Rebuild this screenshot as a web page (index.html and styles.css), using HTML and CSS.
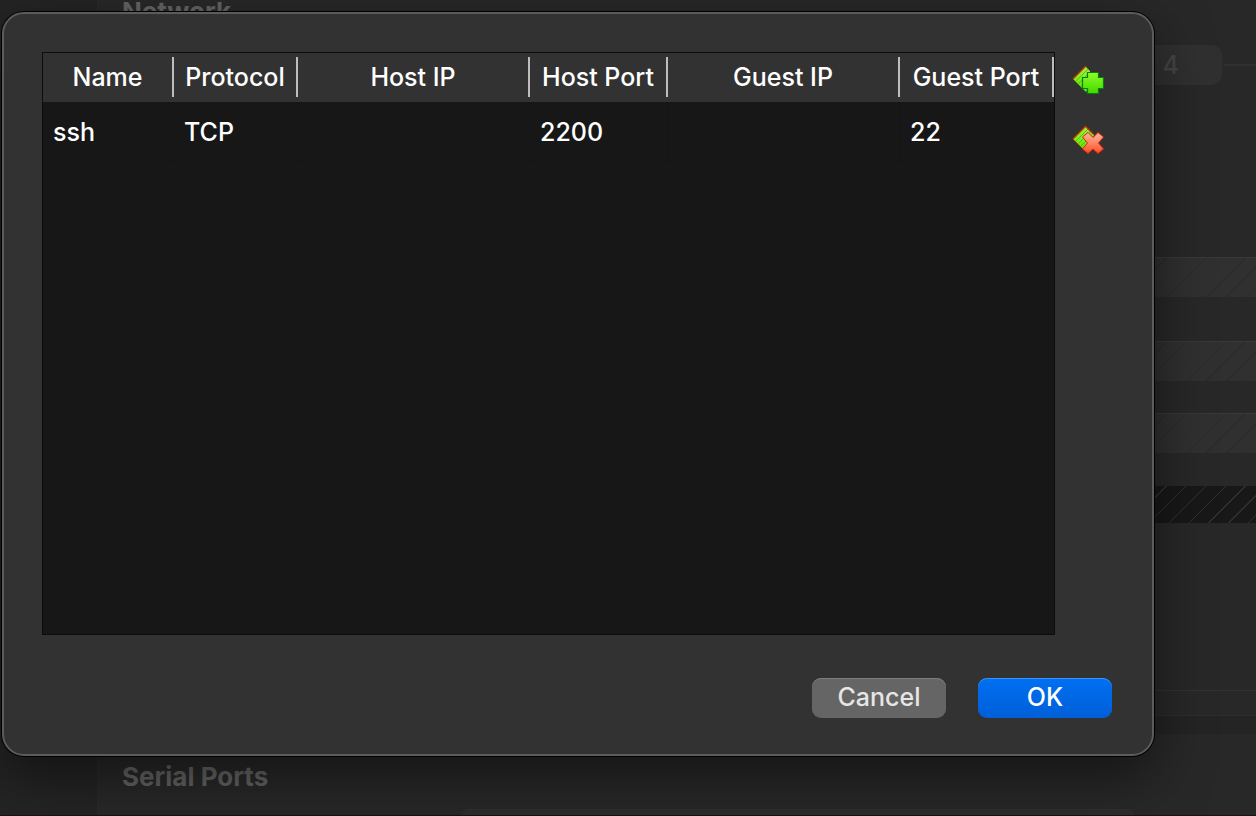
FILE: index.html
```
<!DOCTYPE html>
<html lang="en">
<head>
<meta charset="utf-8">
<title>Port Forwarding Rules</title>
<link rel="stylesheet" href="styles.css">
</head>
<body>
<div class="window">
  <div class="sidebar"></div>
  <main class="settings">
    <h2 class="section-title">Network</h2>
    <div class="field-row">
      <input class="count" type="text" value="4" aria-label="Count" disabled>
      <span class="rule"></span>
    </div>
    <div class="band band-first"></div>
    <div class="band band-second"></div>
    <div class="band band-third"></div>
    <div class="band band-dark"></div>
    <div class="group-end"></div>
    <div class="group-gap"></div>
    <h2 class="section-title">Serial Ports</h2>
    <div class="next-group"></div>
  </main>
</div>

<div class="dialog" role="dialog" aria-label="Port Forwarding Rules">
  <div class="rules">
    <div class="table-frame">
      <table class="rule-table">
        <colgroup>
          <col class="col-name"><col class="col-protocol"><col><col class="col-host-port"><col><col class="col-guest-port">
        </colgroup>
        <thead>
          <tr>
            <th scope="col"><span class="head">Name</span></th>
            <th scope="col"><span class="head">Protocol</span></th>
            <th scope="col"><span class="head">Host IP</span></th>
            <th scope="col"><span class="head">Host Port</span></th>
            <th scope="col"><span class="head">Guest IP</span></th>
            <th scope="col"><span class="head">Guest Port</span></th>
          </tr>
        </thead>
        <tbody>
          <tr><td>ssh</td><td>TCP</td><td></td><td>2200</td><td></td><td>22</td></tr>
        </tbody>
      </table>
    </div>
    <div class="tools">
      <button class="tool" type="button" aria-label="Add rule">
        <svg viewBox="0 0 32 32" width="32" height="32" aria-hidden="true">
          <defs>
            <linearGradient id="leaf" x1="0" y1="0" x2="0" y2="1"><stop offset="0" stop-color="#a4f03c"/><stop offset=".5" stop-color="#7dee1c"/><stop offset="1" stop-color="#4fdc08"/></linearGradient>
            <linearGradient id="plus" x1="0" y1="0" x2="0" y2="1"><stop offset="0" stop-color="#8cff28"/><stop offset="1" stop-color="#43d800"/></linearGradient>
            <linearGradient id="cross" x1="0" y1="0" x2="0" y2="1"><stop offset="0" stop-color="#ffb49a"/><stop offset=".5" stop-color="#ff8565"/><stop offset="1" stop-color="#ff4a20"/></linearGradient>
          </defs>
          <path d="M1 15 13.500 2.500 18 7 18 23 14 28Z" fill="url(#leaf)"/>
          <path d="M4 17 16 5M6.500 19.500 18 8M9 22 18 13M11.500 24.500 18 18" stroke="#56b414" stroke-width=".9" fill="none"/>
          <path d="M14 3 13.500 2.500 1 15" stroke="#c43a00" stroke-width="1.300" fill="none"/>
          <path d="M1 15 14 28" stroke="#3f9c10" stroke-width=".8" fill="none"/>
          <path d="M15.500 8.500h11v5h5v11h-5v5h-11v-5h-5v-11h5z" fill="url(#plus)" stroke="#087d10" stroke-width="1.200"/>
        </svg>
      </button>
      <button class="tool" type="button" aria-label="Remove rule">
        <svg viewBox="0 0 32 32" width="32" height="32" aria-hidden="true">
          <path d="M1 15 13.500 2.500 22 11 14 28Z" fill="url(#leaf)"/>
          <path d="M4 17 16 5M6.500 19.500 18.500 7.500M9 22 20 11M11.500 24.500 18 18" stroke="#56b414" stroke-width=".9" fill="none"/>
          <path d="M21 10 13.500 2.500 1 15" stroke="#c43a00" stroke-width="1.300" fill="none"/>
          <path d="M1 15 14 28" stroke="#a85a00" stroke-width=".9" fill="none"/>
          <path d="M16 8.500 21 13.500 26 8.500 31.500 13 26.500 19 31.500 25 26 29.500 21 25 16 29.500 10.500 25 15.500 19 10.500 13Z" fill="url(#cross)" stroke="#d02a0c" stroke-width="1" stroke-linejoin="round"/>
        </svg>
      </button>
    </div>
  </div>
  <div class="actions">
    <button class="button" type="button">Cancel</button>
    <button class="button button-primary" type="button">OK</button>
  </div>
</div>
</body>
</html>
```
FILE: styles.css
```
* {
  box-sizing: border-box;
}

body {
  margin: 0;
  min-height: 100vh;
  overflow: hidden;
  position: relative;
  background: #282828;
  color: #fff;
  font-family: Inter, "Liberation Sans", sans-serif;
  font-size: 25px;
  font-weight: 500;
  line-height: 32px;
}

/* Settings window behind the dialog */
.window {
  display: flex;
  height: 100vh;
  border-bottom: 1px solid #1d1018;
}

.sidebar {
  flex: 0 0 98px;
  background: #242424;
  border-right: 1px solid #2a2a2a;
}

.settings {
  flex: 1;
  display: flex;
  flex-direction: column;
}

.section-title {
  margin: 0;
  padding-left: 24px;
  color: #636363;
  font-size: 26px;
  line-height: 24px;
  font-weight: 700;
}

.field-row {
  display: flex;
  align-items: center;
  margin-top: 21px;
}

.count {
  flex: 1;
  height: 40px;
  padding: 0 43px 0 0;
  border: 0;
  border-radius: 10px;
  background: #303030;
  color: #454545;
  font: inherit;
  text-align: right;
}

.rule {
  width: 32px;
  margin-left: 2px;
  height: 2px;
  background: #303030;
}

.band {
  height: 40px;
  border-top: 1px solid #383838;
  background: repeating-linear-gradient(135deg, #303030 0, #303030 13px, #2b2b2b 13px, #2b2b2b 14px);
}

.band-first {
  margin-top: 172px;
}

.band-second {
  margin-top: 44px;
}

.band-third {
  margin-top: 32px;
}

.band-dark {
  height: 37px;
  margin-top: 33px;
  border-top: 0;
  background: repeating-linear-gradient(135deg, #181818 0, #181818 13px, #303030 13px, #303030 14px);
}

.group-end {
  height: 26px;
  margin-top: 167px;
  border-top: 1px solid #323232;
  border-bottom: 1px solid #2e2e2e;
}

.group-gap {
  height: 18px;
  margin-bottom: 31px;
  background: #242424;
}

.next-group {
  flex: 1;
  margin: 20px 122px 0 364px;
  border-top: 1px solid #303030;
  border-radius: 8px 8px 0 0;
  background: #2d2d2d;
}

/* Dialog */
.dialog {
  position: absolute;
  top: 12px;
  right: 102px;
  bottom: 60px;
  left: 2px;
  display: flex;
  flex-direction: column;
  gap: 43px;
  padding: 38px 40px 36px 38px;
  border: 2px solid #5c5c5c;
  border-radius: 22px;
  background: #323232;
  box-shadow: 0 0 0 1px #000, 0 20px 56px rgba(0, 0, 0, 0.5);
}

.rules {
  flex: 1;
  display: flex;
  gap: 17px;
}

.table-frame {
  flex: 1;
  border: 1px solid #0c0c0c;
  background: #171717;
}

.rule-table {
  width: 100%;
  table-layout: fixed;
  border-collapse: collapse;
}

.col-name {
  width: 131px;
}

.col-protocol {
  width: 124px;
}

.col-host-port {
  width: 138px;
}

.col-guest-port {
  width: 154px;
}

th {
  padding: 4px 0 5px;
  background: #323232;
  font-weight: 500;
}

.head {
  display: block;
  border-right: 2px solid #bdbdbd;
  line-height: 40px;
  text-align: center;
  white-space: nowrap;
}

td {
  height: 60px;
  padding: 0 0 0 10px;
  box-shadow: inset -1px -1px #151515;
}

.tools {
  flex: 0 0 40px;
  display: flex;
  flex-direction: column;
  gap: 28px;
  padding-top: 12px;
}

.tool {
  width: 32px;
  height: 32px;
  padding: 0;
  border: 0;
  background: none;
}

.tool svg {
  display: block;
}

.actions {
  display: flex;
  justify-content: flex-end;
  gap: 32px;
}

.button {
  width: 134px;
  height: 40px;
  padding: 0 0 2px;
  border: 0;
  border-radius: 9px;
  background: #656565;
  box-shadow: inset 0 1px #7d7d7d;
  color: #e6e6e6;
  font: inherit;
}

.button-primary {
  background: linear-gradient(#0070f2, #005fd8);
  box-shadow: inset 0 1px #3b91f5;
  color: #fff;
}
```
